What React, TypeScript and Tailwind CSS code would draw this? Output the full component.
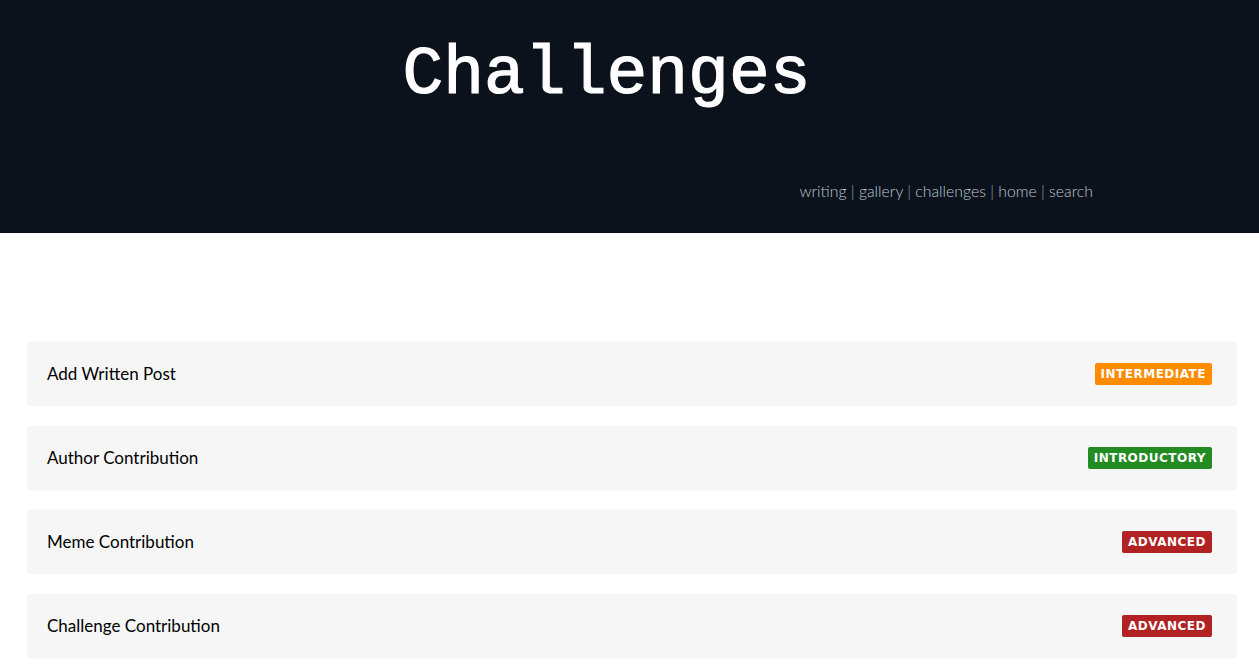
const challenges = [
  { name: "Add Written Post", level: "INTERMEDIATE", color: "bg-[#ff8c00]" },
  { name: "Author Contribution", level: "INTRODUCTORY", color: "bg-[#228b22]" },
  { name: "Meme Contribution", level: "ADVANCED", color: "bg-[#b22222]" },
  { name: "Challenge Contribution", level: "ADVANCED", color: "bg-[#b22222]" },
];

const links = ["writing", "gallery", "challenges", "home", "search"];

export default function App() {
  return (
    <div className="min-h-screen bg-white font-['Lato','Noto_Sans',sans-serif]">
      <header className="h-[233px] bg-[#0c121b] flex flex-col">
        <div className="flex justify-center pr-[46px] pt-[33px]">
          <h1 className="font-['Liberation_Mono',monospace] text-[68px] leading-[84px] text-white [-webkit-text-stroke:1.2px_white]">
            Challenges
          </h1>
        </div>
        <nav className="mt-[62px] text-right pr-[166px] text-[15.8px] font-light text-[#bcc7d4] whitespace-pre">
          {links.map((l, i) => (
            <span key={l}>
              {i > 0 && <span className="text-[#9aa8b8]">{" | "}</span>}
              {l}
            </span>
          ))}
        </nav>
      </header>
      <main className="pt-[109px] pl-[27px] pr-[22px] flex flex-col gap-5">
        {challenges.map((c) => (
          <div
            key={c.name}
            className="h-16 rounded-[4px] bg-[#f6f6f6] flex items-center justify-between pl-5 pr-[25px]"
          >
            <span className="text-[17px] text-black">{c.name}</span>
            <span
              className={`${c.color} rounded-[2px] px-[6px] h-[22px] flex items-center text-white text-[12px] font-bold tracking-[0.5px] font-['DejaVu_Sans',sans-serif]`}
            >
              {c.level}
            </span>
          </div>
        ))}
      </main>
    </div>
  );
}
